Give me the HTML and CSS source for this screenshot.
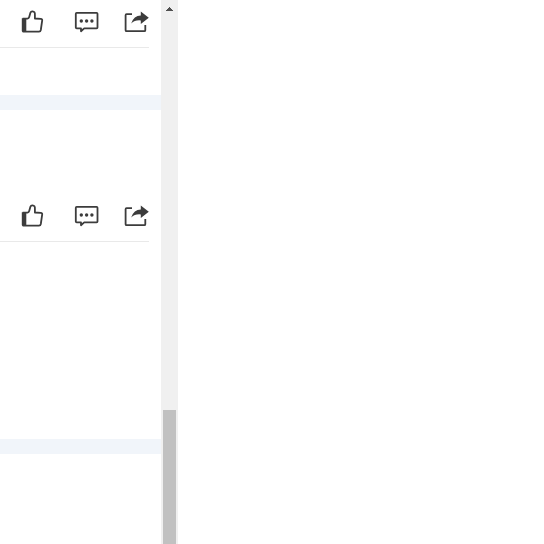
FILE: index.html
```html
<!DOCTYPE html>
<html lang="en">
<head>
<meta charset="utf-8">
<title>Feed</title>
<link rel="stylesheet" href="styles.css">
</head>
<body>
<svg class="sprite" aria-hidden="true">
  <symbol id="like" viewBox="0 0 28 28">
    <path class="solid" d="M.8 10.2H5.3V24H1.8Q.8 24 .8 23z"/>
    <path class="line" d="M1.6 10.7H6.4Q7.8 10.4 8.2 9L9.4 4.8Q9.9 3.2 11.5 3.3Q14.2 3.5 13.9 7V10.5L19.8 10.8Q21.4 11 21.2 12.4L19.8 22Q19.5 23.6 18 23.6H1.6"/>
  </symbol>
  <symbol id="comment" viewBox="0 0 28 28">
    <path class="line" d="M5.7 4.9H25.6Q26.5 4.9 26.5 5.8V19.5Q26.5 20.4 25.6 20.4H13.2L10 23.2V20.4H5.7Q4.8 20.4 4.8 19.5V5.8Q4.8 4.9 5.7 4.9z"/>
    <circle class="solid" cx="10.3" cy="13" r="1.7"/>
    <circle class="solid" cx="15.6" cy="13" r="1.7"/>
    <circle class="solid" cx="20.9" cy="13" r="1.7"/>
  </symbol>
  <symbol id="share" viewBox="0 0 28 28">
    <path class="line" d="M11 6.2H5.6Q4.6 6.2 4.6 7.2V22.2Q4.6 23.2 5.6 23.2H23.3Q24.3 23.2 24.3 22.2V17"/>
    <path class="solid" d="M10.2 15.4Q12.8 7.4 19.8 7.4V3.6L27.8 9.8L19.8 16V12.4Q14 11.8 10.2 15.4z"/>
  </symbol>
</svg>
<div class="page">
  <main class="feed">
    <article class="post first">
      <div class="actions">
        <button type="button" aria-label="Like"><svg><use href="#like"/></svg></button>
        <button type="button" aria-label="Comment"><svg><use href="#comment"/></svg></button>
        <button type="button" aria-label="Share"><svg><use href="#share"/></svg></button>
      </div>
    </article>
    <article class="post second">
      <div class="actions">
        <button type="button" aria-label="Like"><svg><use href="#like"/></svg></button>
        <button type="button" aria-label="Comment"><svg><use href="#comment"/></svg></button>
        <button type="button" aria-label="Share"><svg><use href="#share"/></svg></button>
      </div>
    </article>
    <article class="post"></article>
  </main>
  <div class="scrollbar">
    <svg class="arrow" viewBox="0 0 17 17" aria-hidden="true"><path d="M8 7H9V8H10V9H11V10H12V11H5V10H6V9H7V8H8z"/></svg>
    <div class="thumb"></div>
  </div>
</div>
</body>
</html>
```
FILE: styles.css
```css
body {
  margin: 0;
  background: #fff;
  font-family: "Liberation Sans", Arial, sans-serif;
}

.sprite {
  position: absolute;
  width: 0;
  height: 0;
}

.page {
  display: grid;
  grid-template-columns: 161px 17px;
  min-height: 100vh;
}

.post {
  padding-right: 12px;
}

.first {
  padding-bottom: 47px;
}

.second {
  padding-top: 84px;
  padding-bottom: 197px;
}

.first,
.second {
  border-bottom: 15px solid #f1f5fa;
}

.actions {
  display: flex;
  justify-content: flex-end;
  gap: 22px;
  padding: 8px 0 11px;
  border-bottom: 1px solid #e9e9e9;
}

.actions button {
  padding: 0;
  border: 0;
  background: none;
  cursor: pointer;
}

.actions svg {
  display: block;
  width: 28px;
  height: 28px;
}

.line {
  fill: none;
  stroke: #3c3c3c;
  stroke-width: 1.8;
  stroke-linejoin: round;
}

.solid {
  fill: #3c3c3c;
}

.scrollbar {
  display: flex;
  flex-direction: column;
  justify-content: space-between;
  background: #f0f0f0;
}

.arrow {
  display: block;
  width: 17px;
  height: 17px;
  fill: #505050;
  shape-rendering: crispEdges;
}

.thumb {
  height: 134px;
  margin: 0 2px;
  background: #c1c1c1;
}
```
